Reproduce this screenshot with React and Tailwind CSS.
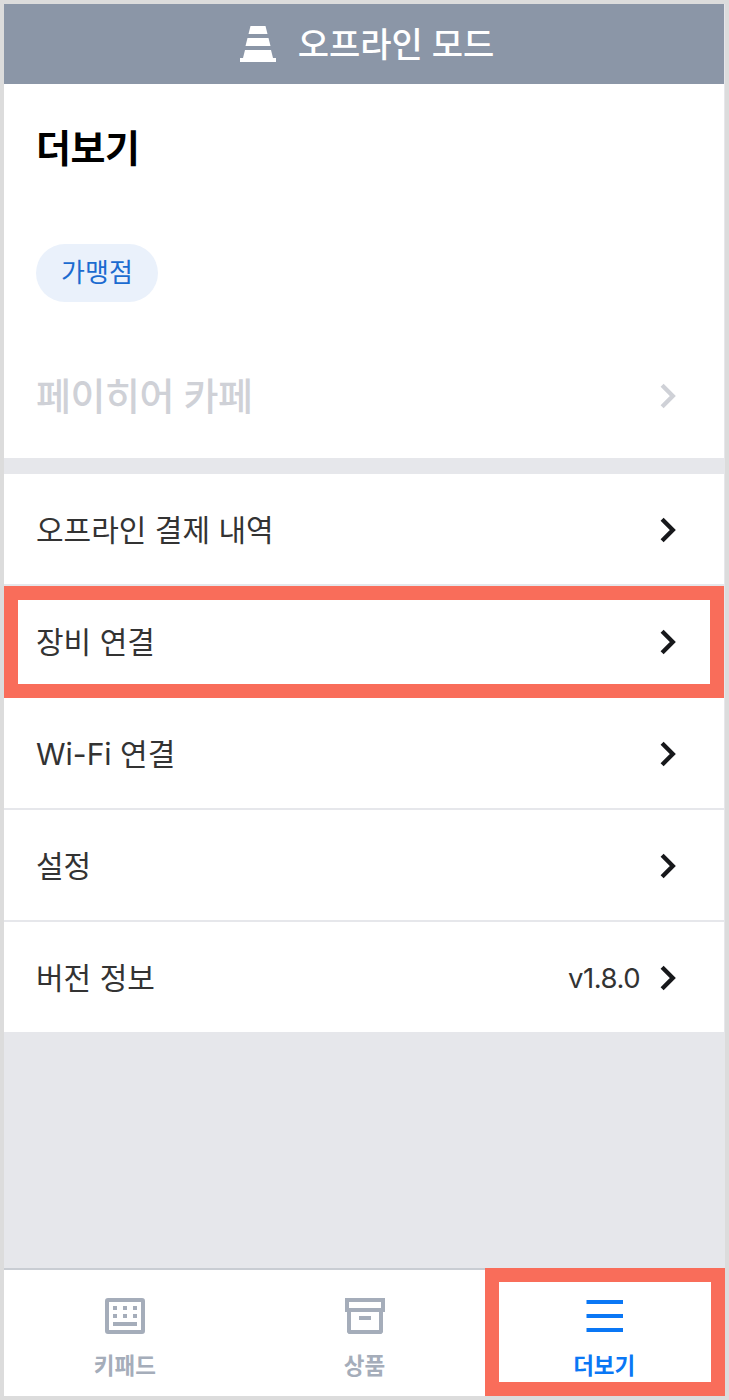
import React from 'react';

function Chevron({ className }) {
  return (
    <svg width="18" height="28" viewBox="0 0 18 28" fill="none" className={className}>
      <path d="M2.1 3.3L12.8 14L2.1 24.7" stroke="currentColor" strokeWidth="4.3" />
    </svg>
  );
}

function ConeIcon() {
  return (
    <svg width="36" height="36" viewBox="0 0 36 36" fill="white">
      <path d="M10.5 0H25.5L27.5 8H8.5Z" />
      <path d="M7.5 12H28.5L30.5 20H5.5Z" />
      <path d="M5 24H31L33 32H36V36H0V32H3Z" />
    </svg>
  );
}

function KeypadIcon() {
  return (
    <svg width="40" height="36" viewBox="0 0 40 36" fill="currentColor">
      <rect x="2" y="2" width="36" height="32" rx="1" fill="none" stroke="currentColor" strokeWidth="4" />
      <path d="M8 8h4v4H8zM18 8h4v4h-4zM28 8h4v4h-4zM8 16h4v4H8zM18 16h4v4h-4zM28 16h4v4h-4zM8 24h24v4H8z" />
    </svg>
  );
}

function BoxIcon() {
  return (
    <svg width="40" height="36" viewBox="0 0 40 36" fill="none" stroke="currentColor" strokeWidth="4">
      <rect x="2" y="2" width="36" height="10" />
      <path d="M4 12V33.5L4.5 34H35.5L36 33.5V12M14 20H26" />
    </svg>
  );
}

function MenuIcon() {
  return (
    <svg width="38" height="36" viewBox="0 0 38 36" stroke="currentColor" strokeWidth="4">
      <path d="M1.5 4H38M1.5 18H38M1.5 32H38" />
    </svg>
  );
}

function Row({ label, value, className = 'border-b-2 border-[#e6e7eb] pt-[2px]' }) {
  return (
    <li className={`flex h-28 items-center justify-between pr-[46px] pl-8 ${className}`}>
      <span>{label}</span>
      <div className="flex items-center gap-5">
        {value && <span className="text-[27.5px] tracking-[-0.5px]">{value}</span>}
        <Chevron className="text-[#17181b]" />
      </div>
    </li>
  );
}

function Tab({ icon, label, className = 'text-[#a5adba]' }) {
  return (
    <button className={`flex w-60 flex-col items-center pt-7 font-bold ${className}`}>
      {icon}
      <span className="mt-4 text-[22.5px] leading-8">{label}</span>
    </button>
  );
}

export default function App() {
  return (
    <div className="h-[1400px] w-[729px] border-4 border-[#dcdcdc] bg-[#e6e7eb] font-['Inter','Noto_Sans_CJK_KR',sans-serif]">
      <div className="flex h-full w-[720px] flex-col">
        <header className="flex h-20 shrink-0 items-center justify-center gap-[22px] bg-[#8b96a7] pl-[6px] text-white">
          <ConeIcon />
          <span className="pt-px text-[34px] leading-[50px] font-medium">오프라인 모드</span>
        </header>

        <section className="flex h-[374px] shrink-0 flex-col items-start bg-white px-8 pt-9">
          <h1 className="text-[38px] leading-[56px] font-bold tracking-[-0.5px] text-black">더보기</h1>
          <span className="mt-[68px] flex h-[58px] w-[122px] items-center justify-center rounded-full bg-[#eaf1fb] pb-[2px] text-[26px] text-[#1b6bd0]">
            가맹점
          </span>
          <div className="mt-[66px] flex w-full items-center justify-between pr-[14px] text-[38px] leading-[56px] text-[#cfd1d7]">
            <span className="font-medium tracking-[-0.5px]">페이히어 카페</span>
            <Chevron />
          </div>
        </section>

        <ul className="mt-4 shrink-0 bg-white text-[30px] leading-[44px] text-[#333333]">
          <Row label="오프라인 결제 내역" />
          <Row
            label="장비 연결"
            className="relative before:absolute before:inset-0 before:border-[14px] before:border-[#f96d5a]"
          />
          <Row label="Wi-Fi 연결" />
          <Row label="설정" />
          <Row label="버전 정보" value="v1.8.0" className="-mb-[2px] border-b-2 border-[#e6e7eb] pt-[2px]" />
        </ul>

        <nav className="relative mt-auto flex h-32 shrink-0 border-t-2 border-[#c9cdd3] bg-white pl-px">
          <Tab icon={<KeypadIcon />} label="키패드" />
          <Tab icon={<BoxIcon />} label="상품" />
          <Tab icon={<MenuIcon />} label="더보기" className="text-[#0a77f5]" />
          <div className="absolute -top-[2px] -right-px h-32 w-60 border-[14px] border-[#f96d5a]" />
        </nav>
      </div>
    </div>
  );
}
